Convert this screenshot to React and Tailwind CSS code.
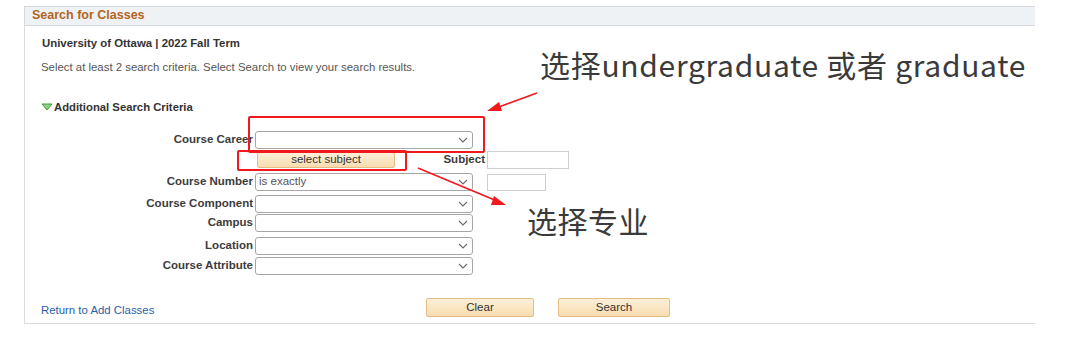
import { useState } from "react";

const Chevron = () => (
  <svg width="10" height="6" viewBox="0 0 10 6" className="shrink-0">
    <path d="M1 1 L5 5 L9 1" fill="none" stroke="#6b6b6b" strokeWidth="1.1" />
  </svg>
);

function Select({ value = "", className = "" }) {
  return (
    <div
      className={`w-[218px] h-[18px] bg-white border border-[#a6a6a6] rounded-[3px] flex items-center justify-between pl-[3px] pr-[4px] ${className}`}
    >
      <span className="text-[11.5px] text-[#555] leading-none">{value}</span>
      <Chevron />
    </div>
  );
}

function FieldRow({ label, mt, children }) {
  return (
    <div className={`flex items-center h-[18px] ${mt}`}>
      <div className="w-[228px] text-right font-bold text-[11.5px] text-[#3c3c3c] leading-none">
        {label}
      </div>
      <div className="ml-[2px] flex items-center">{children}</div>
    </div>
  );
}

const orangeBtn =
  "bg-gradient-to-b from-[#fdf0d8] to-[#f7ddb0] border border-[#e5bd85] rounded-[2px] text-[#333] text-[11.5px] flex items-center justify-center";

export default function App() {
  const [career] = useState("");

  return (
    <div
      className="relative w-[1080px] h-[338px] bg-white overflow-hidden"
      style={{ fontFamily: '"Liberation Sans", Arial, sans-serif' }}
    >
      <div className="ml-[24px] pt-[6px] w-[1011px]">
        <div className="h-[20px] bg-[#eff2f4] border-t border-b border-l border-[#d5dadf] flex items-center pl-[7px]">
          <span className="text-[12.5px] font-bold text-[#b3651f] -mt-[1px]">Search for Classes</span>
        </div>

        <div className="border-l border-b border-[#d9dae2] h-[298px]">
          <div className="pt-[10px] pl-[17px] text-[11.4px] leading-[14px] font-bold text-[#333]">
            University of Ottawa | 2022 Fall Term
          </div>
          <div className="mt-[10px] pl-[16px] text-[11.4px] leading-[14px] text-[#555]">
            Select at least 2 search criteria. Select Search to view your search results.
          </div>
          <div className="mt-[26px] pl-[16px] flex items-center h-[14px]">
            <svg width="12" height="8" viewBox="0 0 12 8">
              <polygon points="1,1 11,1 6,7" fill="#8fcf8a" stroke="#3f9a3a" strokeWidth="1" strokeLinejoin="round" />
            </svg>
            <span className="ml-[1px] text-[11.3px] font-bold text-[#333]">Additional Search Criteria</span>
          </div>

          <FieldRow label="Course Career" mt="mt-[17px]">
            <Select value={career} />
          </FieldRow>

          <div className="flex items-center h-[18px] mt-[2px]">
            <div className="w-[232px]" />
            <div className={`w-[138px] h-[16px] ${orangeBtn}`}>select subject</div>
            <div className="w-[90px] text-right font-bold text-[11.5px] text-[#3c3c3c]">Subject</div>
            <div className="ml-[2px] w-[82px] h-[18px] border border-[#cfcfcf] bg-white" />
          </div>

          <FieldRow label="Course Number" mt="mt-[4px]">
            <Select value="is exactly" />
            <div className="ml-[14px] w-[59px] h-[17px] border border-[#cfcfcf] bg-white" />
          </FieldRow>
          <FieldRow label="Course Component" mt="mt-[4px]">
            <Select />
          </FieldRow>
          <FieldRow label="Campus" mt="mt-[1px]">
            <Select />
          </FieldRow>
          <FieldRow label="Location" mt="mt-[5px]">
            <Select />
          </FieldRow>
          <FieldRow label="Course Attribute" mt="mt-[2px]">
            <Select />
          </FieldRow>

          <div className="mt-[23px] flex items-end h-[19px]">
            <div className="w-[401px] pl-[16px] text-[11.4px] text-[#2b5ea7] leading-none pb-[1px]">
              Return to Add Classes
            </div>
            <div className={`w-[108px] h-[19px] ${orangeBtn}`}>Clear</div>
            <div className={`ml-[24px] w-[112px] h-[19px] ${orangeBtn}`}>Search</div>
          </div>
        </div>
      </div>

      {/* annotation overlay */}
      <div className="absolute left-[248px] top-[116px] w-[237px] h-[37px] border-2 border-[#f0191e] rounded-[2px]" />
      <div className="absolute left-[237px] top-[150px] w-[170px] h-[21px] border-2 border-[#f0191e] rounded-[2px]" />
      <svg className="absolute left-0 top-0 pointer-events-none" width="1080" height="338">
        <line x1="537" y1="93" x2="496" y2="108" stroke="#f0191e" strokeWidth="1.6" />
        <polygon points="487,111 499,102 502,111" fill="#f0191e" />
        <line x1="418" y1="168" x2="497" y2="201" stroke="#f0191e" strokeWidth="1.6" />
        <polygon points="506,205 494,196 491,205" fill="#f0191e" />
      </svg>
      <div
        className="absolute left-[540px] top-[44px] text-[30px] leading-[40px] tracking-[0.7px] text-[#3a3a3a] whitespace-nowrap"
        style={{ fontFamily: '"Noto Sans CJK SC", "Noto Sans", sans-serif' }}
      >
        选择undergraduate 或者 graduate
      </div>
      <div
        className="absolute left-[527px] top-[200px] text-[30px] leading-[40px] tracking-[0.5px] text-[#3a3a3a] whitespace-nowrap"
        style={{ fontFamily: '"Noto Sans CJK SC", "Noto Sans", sans-serif' }}
      >
        选择专业
      </div>
    </div>
  );
}
